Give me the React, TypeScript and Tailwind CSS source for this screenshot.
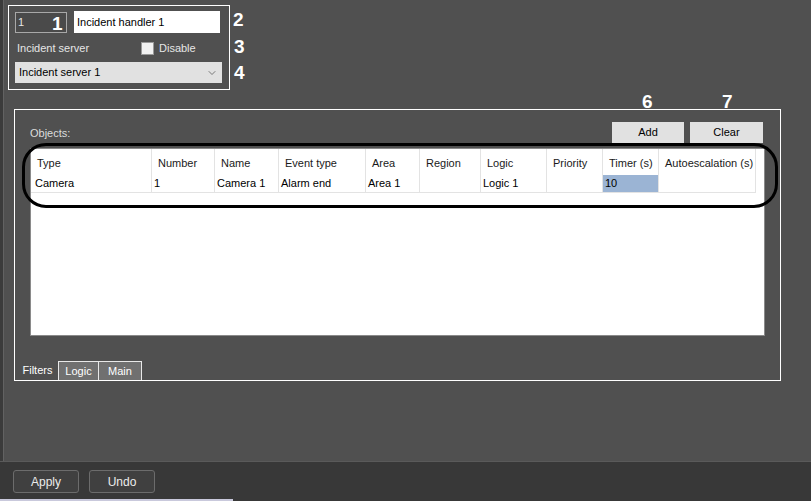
import { ChevronDown } from "lucide-react";

const columns = [
  { title: "Type", width: "w-[121px]", value: "Camera", first: true },
  { title: "Number", width: "w-[63px]", value: "1" },
  { title: "Name", width: "w-[64px]", value: "Camera 1" },
  { title: "Event type", width: "w-[87px]", value: "Alarm end" },
  { title: "Area", width: "w-[54px]", value: "Area 1" },
  { title: "Region", width: "w-[61px]", value: "" },
  { title: "Logic", width: "w-[66px]", value: "Logic 1" },
  { title: "Priority", width: "w-[56px]", value: "" },
  { title: "Timer (s)", width: "w-[56px]", value: "10", selected: true },
  { title: "Autoescalation (s)", width: "w-[97px]", value: "" },
];

export default function App() {
  return (
    <div className="relative flex h-[501px] w-[811px] flex-col overflow-hidden bg-[#505050] font-['Liberation_Sans',Arial,sans-serif] text-[11px] text-[#e6e6e6]">
      <div className="flex flex-1">
        {/* left window edge */}
        <div className="w-[3px] bg-[#3b3b3b]" />
        <div className="w-px bg-[#626262]" />

        <div className="flex flex-1 flex-col">
          <HandlerBox />
          <ObjectsPanel />
        </div>
      </div>

      <div className="h-px bg-[#5a5a5a]" />
      <div className="flex h-[37px] items-start gap-[10px] bg-[#383838] pl-[13px] pt-[8px]">
        <DarkButton label="Apply" />
        <DarkButton label="Undo" />
      </div>
      <div className="h-[2px] bg-[#383838]">
        <div className="h-full w-[233px] bg-[#c9c9dc]" />
      </div>

      {/* annotations */}
      <Mark className="left-[52px] top-[14px]" text="1" />
      <Mark className="left-[233px] top-[10px]" text="2" />
      <Mark className="left-[234px] top-[37px]" text="3" />
      <Mark className="left-[234px] top-[63px]" text="4" />
      <Mark className="left-[403px] top-[216px] text-black" text="5" />
      <Mark className="left-[642px] top-[92px] text-[17px]" text="6" />
      <Mark className="left-[722px] top-[92px] text-[17px]" text="7" />
      <div className="pointer-events-none absolute left-[22px] top-[143px] h-[65px] w-[756px] rounded-[24px] border-[3px] border-black" />
    </div>
  );
}

function HandlerBox() {
  return (
    <div className="ml-[4px] mt-[5px] box-border h-[85px] w-[222px] border border-white pl-[6px]">
      <div className="mt-[5px] flex items-start gap-[7px]">
        <div className="mt-px box-border flex h-[21px] w-[52px] items-center border border-[#a8a8a8] bg-[#4a4a4a] pl-[2px] text-[#e6e6e6]">1</div>
        <div className="box-border flex h-[22px] w-[146px] items-center bg-white pl-[3px] text-black">Incident handler 1</div>
      </div>
      <div className="mt-[8px] flex h-[15px] items-center">
        <span className="w-[126px] pl-[2px]">Incident server</span>
        <span className="box-border h-[13px] w-[13px] border border-[#9a9a9a] bg-[#f2f2f2]" />
        <span className="ml-[5px]">Disable</span>
      </div>
      <div className="mt-[6px] box-border flex h-[21px] w-[207px] items-center justify-between bg-[#e1e1e1] pl-[4px] pr-[4px] text-black">
        <span>Incident server 1</span>
        <ChevronDown className="h-[12px] w-[12px] text-[#555]" strokeWidth={1.5} />
      </div>
    </div>
  );
}

function ObjectsPanel() {
  return (
    <div className="ml-[10px] mt-[19px] box-border flex h-[272px] w-[767px] flex-col border border-white">
      <div className="mt-[12px] flex h-[21px] items-center pr-[17px]">
        <span className="pl-[15px] pt-[2px] text-[#dcdcdc]">Objects:</span>
        <div className="ml-auto flex gap-[6px]">
          <LightButton label="Add" width="w-[72px]" />
          <LightButton label="Clear" width="w-[73px]" />
        </div>
      </div>

      <div className="ml-[15px] mt-[5px] box-border h-[188px] w-[735px] border border-[#8a8a8a] bg-white text-black">
        <div className="flex h-[26px]">
          {columns.map((col) => (
            <div key={col.title} className={`${col.width} flex items-center border-r border-[#e3e3e3] pl-[6px] pt-[2px] text-[#1a1a1a]`}>
              {col.title}
            </div>
          ))}
        </div>
        <div className="flex h-[18px]">
          {columns.map((col) => (
            <div
              key={col.title}
              className={`${col.width} flex items-center border-r border-b border-[#e3e3e3] ${col.first ? "pl-[4px]" : "pl-[2px]"} ${col.selected ? "bg-[#9bb4d4]" : ""}`}
            >
              {col.value}
            </div>
          ))}
        </div>
      </div>

      <div className="mt-auto flex h-[19px] items-stretch pl-[2px]">
        <div className="flex w-[41px] items-center justify-center text-white">Filters</div>
        <div className="flex w-[41px] items-center justify-center border border-b-0 border-[#e8e8e8] bg-[#707070] text-white">Logic</div>
        <div className="flex w-[43px] items-center justify-center border border-b-0 border-l-0 border-[#e8e8e8] bg-[#707070] text-white">Main</div>
      </div>
    </div>
  );
}

function LightButton({ label, width }: { label: string; width: string }) {
  return <div className={`${width} flex h-[21px] items-center justify-center bg-[#e1e1e1] text-black`}>{label}</div>;
}

function DarkButton({ label }: { label: string }) {
  return (
    <div className="box-border flex h-[23px] w-[66px] items-center justify-center rounded-[3px] border border-[#6c6c6c] bg-[#404040] text-[12px] text-[#ececec]">
      {label}
    </div>
  );
}

function Mark({ text, className }: { text: string; className: string }) {
  return <div className={`pointer-events-none absolute text-[19px] font-bold leading-none text-white ${className}`}>{text}</div>;
}
